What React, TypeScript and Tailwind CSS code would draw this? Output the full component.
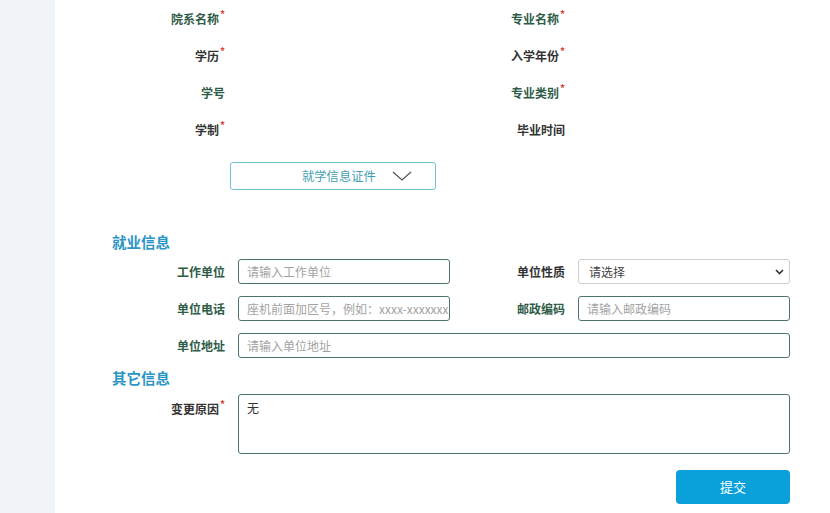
const FONT = "font-['Microsoft_YaHei','Noto_Sans_CJK_SC',sans-serif]";

function Star() {
  return <span className="relative -top-[6px] ml-[1px] text-[10px] text-[#d9433a]">*</span>;
}

function Label({ text, req, green, w }: { text: string; req?: boolean; green?: boolean; w: string }) {
  return (
    <div className={`${w} shrink-0 text-right text-[12px] font-bold ${green ? "text-[#2f5c47]" : "text-[#333]"}`}>
      {text}
      {req && <Star />}
    </div>
  );
}

function Field({ placeholder, wide }: { placeholder: string; wide?: boolean }) {
  return (
    <div
      className={`ml-[13px] flex h-[25px] items-center overflow-hidden whitespace-nowrap rounded-[3px] border border-[#4d7565] px-[8px] text-[12px] text-[#a3a3a3] ${wide ? "w-[552px]" : "w-[212px]"}`}
    >
      {placeholder}
    </div>
  );
}

const studyRows = [
  { l: "院系名称", lr: true, lg: true, r: "专业名称", rr: true, rg: true },
  { l: "学历", lr: true, lg: false, r: "入学年份", rr: true, rg: false },
  { l: "学号", lr: false, lg: true, r: "专业类别", rr: true, rg: true },
  { l: "学制", lr: true, lg: false, r: "毕业时间", rr: false, rg: false },
];

export default function App() {
  return (
    <div className={`flex h-[513px] w-[830px] overflow-hidden bg-white ${FONT}`}>
      <div className="w-[55px] shrink-0 bg-[#f0f3f8]" />
      <div className="flex-1 bg-white">
        {/* 就学信息 */}
        <div className="flex flex-col">
          {studyRows.map((r) => (
            <div key={r.l} className="flex h-[37px] items-center">
              <Label text={r.l} req={r.lr} green={r.lg} w="w-[170px]" />
              <div className="w-[225px] shrink-0" />
              <Label text={r.r} req={r.rr} green={r.rg} w="w-[115px]" />
            </div>
          ))}
        </div>

        <div className="ml-[175px] mt-[14px] flex h-[28px] w-[206px] items-center gap-[16px] rounded-[3px] border border-[#6cc4cf] pl-[71px] text-[12.3px] text-[#3f9eb4]">
          <span>就学信息证件</span>
          <svg width="20" height="10" viewBox="0 0 20 10" fill="none">
            <polyline points="1,1 10,9 19,1" stroke="#555" strokeWidth="1.3" />
          </svg>
        </div>

        {/* 就业信息 */}
        <div className="ml-[57px] mt-[42px] h-[20px] text-[14.5px] font-bold leading-[20px] text-[#2b94c6]">就业信息</div>

        <div className="mt-[7px] flex flex-col gap-[12px]">
          <div className="flex items-center">
            <Label text="工作单位" green w="w-[170px]" />
            <Field placeholder="请输入工作单位" />
            <Label text="单位性质" w="w-[115px]" />
            <div className="ml-[13px] flex h-[25px] w-[212px] items-center justify-between rounded-[3px] border border-[#cfcfcf] pl-[10px] pr-[5px] text-[12px] text-[#444]">
              <span>请选择</span>
              <svg width="9" height="6" viewBox="0 0 9 6" fill="none">
                <polyline points="1,1 4.5,4.5 8,1" stroke="#333" strokeWidth="1.6" />
              </svg>
            </div>
          </div>
          <div className="flex items-center">
            <Label text="单位电话" green w="w-[170px]" />
            <Field placeholder="座机前面加区号，例如：xxxx-xxxxxxx" />
            <Label text="邮政编码" green w="w-[115px]" />
            <Field placeholder="请输入邮政编码" />
          </div>
          <div className="flex items-center">
            <Label text="单位地址" green w="w-[170px]" />
            <Field placeholder="请输入单位地址" wide />
          </div>
        </div>

        {/* 其它信息 */}
        <div className="ml-[57px] mt-[10px] h-[20px] text-[14.5px] font-bold leading-[20px] text-[#2b94c6]">其它信息</div>

        <div className="mt-[6px] flex items-start">
          <div className="pt-[6px]">
            <Label text="变更原因" req w="w-[170px]" />
          </div>
          <div className="ml-[13px] h-[60px] w-[552px] rounded-[3px] border border-[#4d7565] px-[8px] pt-[4px] text-[12px] text-[#333]">
            无
          </div>
        </div>

        <div className="mt-[16px] flex">
          <div className="ml-[621px] flex h-[34px] w-[114px] items-center justify-center rounded-[4px] bg-[#0aa1db] text-[13px] text-white">
            提交
          </div>
        </div>
      </div>
    </div>
  );
}
